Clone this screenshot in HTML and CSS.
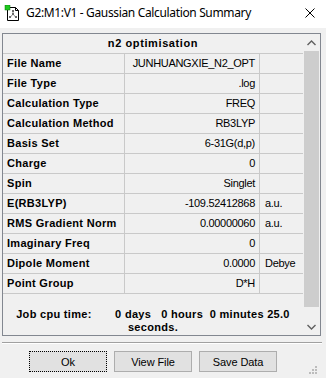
FILE: index.html
```html
<!DOCTYPE html>
<html>
<head>
<meta charset="utf-8">
<link rel="stylesheet" href="styles.css">
</head>
<body>
<div class="window">
  <div class="titlebar">
    <svg class="app-icon" width="16" height="16" viewBox="0 0 16 16">
      <path d="M3.5 2.5 H11.5 L14.5 5.5 V15.5 H3.5 Z" fill="#fff" stroke="#000" stroke-width="1"/>
      <path d="M11.5 2.5 V5.5 H14.5" fill="none" stroke="#000" stroke-width="1"/>
      <path d="M9 6 L9 9 M9 9 L6.5 12 M9 9 L11.5 12" stroke="#8a8a8a" stroke-width="1" fill="none"/>
      <rect x="8" y="5" width="2" height="2" fill="#6a6a6a"/>
      <rect x="8" y="8" width="2" height="2" fill="#6a6a6a"/>
      <rect x="5" y="11" width="2" height="2" fill="#6a6a6a"/>
      <rect x="11" y="11" width="2" height="2" fill="#6a6a6a"/>
      <rect x="1" y="0" width="5" height="5" fill="#1ec81e" stroke="#0a7a0a" stroke-width="0.5"/>
    </svg>
    <span class="title">G2:M1:V1 - Gaussian Calculation Summary</span>
    <svg class="close" width="10" height="10" viewBox="0 0 10 10">
      <path d="M0.5 0.5 L9.5 9.5 M9.5 0.5 L0.5 9.5" stroke="#000" stroke-width="1"/>
    </svg>
  </div>
  <div class="client">
    <div class="frame">
      <div class="list">
        <div class="grid">
          <div class="head">n2 optimisation</div>
          <div class="lbl">File Name</div><div class="val">JUNHUANGXIE_N2_OPT</div><div class="unit"></div>
          <div class="lbl">File Type</div><div class="val">.log</div><div class="unit"></div>
          <div class="lbl">Calculation Type</div><div class="val">FREQ</div><div class="unit"></div>
          <div class="lbl">Calculation Method</div><div class="val">RB3LYP</div><div class="unit"></div>
          <div class="lbl">Basis Set</div><div class="val">6-31G(d,p)</div><div class="unit"></div>
          <div class="lbl">Charge</div><div class="val">0</div><div class="unit"></div>
          <div class="lbl">Spin</div><div class="val">Singlet</div><div class="unit"></div>
          <div class="lbl">E(RB3LYP)</div><div class="val">-109.52412868</div><div class="unit">a.u.</div>
          <div class="lbl">RMS Gradient Norm</div><div class="val">0.00000060</div><div class="unit">a.u.</div>
          <div class="lbl">Imaginary Freq</div><div class="val">0</div><div class="unit"></div>
          <div class="lbl">Dipole Moment</div><div class="val">0.0000</div><div class="unit">Debye</div>
          <div class="lbl">Point Group</div><div class="val">D*H</div><div class="unit"></div>
        </div>
        <p class="cpu">Job cpu time:       0 days   0 hours  0 minutes 25.0 seconds.</p>
      </div>
      <div class="scrollbar">
        <div class="arrow">
          <svg width="9" height="6" viewBox="0 0 9 6"><path d="M0.5 5 L4.5 1 L8.5 5" stroke="#606060" stroke-width="1.4" fill="none"/></svg>
        </div>
        <div class="track"><div class="thumb"></div></div>
        <div class="arrow">
          <svg width="9" height="6" viewBox="0 0 9 6"><path d="M0.5 1 L4.5 5 L8.5 1" stroke="#606060" stroke-width="1.4" fill="none"/></svg>
        </div>
      </div>
    </div>
    <div class="sep"></div>
    <div class="buttons">
      <button class="btn default">Ok</button>
      <button class="btn">View File</button>
      <button class="btn">Save Data</button>
    </div>
    <svg class="grip" width="8" height="8" viewBox="0 0 8 8">
      <rect x="6" y="0" width="2" height="2" fill="#bcbcbc"/>
      <rect x="3" y="3" width="2" height="2" fill="#bcbcbc"/>
      <rect x="6" y="3" width="2" height="2" fill="#bcbcbc"/>
      <rect x="0" y="6" width="2" height="2" fill="#bcbcbc"/>
      <rect x="3" y="6" width="2" height="2" fill="#bcbcbc"/>
      <rect x="6" y="6" width="2" height="2" fill="#bcbcbc"/>
    </svg>
  </div>
</div>
</body>
</html>
```

FILE: styles.css
```css
html, body {
  margin: 0;
  padding: 0;
}
body {
  width: 326px;
  height: 378px;
  overflow: hidden;
  background: #f0f0f0;
  font-family: "Liberation Sans", Arial, sans-serif;
  color: #000;
}
.window {
  width: 326px;
  height: 378px;
  position: relative;
}
.titlebar {
  height: 28px;
  background: #fff;
  display: flex;
  align-items: center;
  position: relative;
}
.app-icon {
  margin-left: 4px;
  margin-top: -2px;
}
.title {
  margin-left: 6px;
  font-family: "Noto Sans", "Open Sans", sans-serif;
  font-size: 12px;
  letter-spacing: -0.35px;
  color: #000;
  margin-top: -3px;
}
.close {
  position: absolute;
  left: 305px;
  top: 8px;
}
.client {
  position: relative;
  height: 350px;
}
.frame {
  margin: 5px 0 0 2px;
  width: 319px;
  height: 303px;
  box-sizing: border-box;
  border: 1px solid #828790;
  display: flex;
}
.list {
  width: 300px;
  flex: none;
}
.grid {
  display: grid;
  grid-template-columns: 122px 135px 43px;
  grid-auto-rows: 20px;
}
.grid > div {
  box-sizing: border-box;
  border-bottom: 1px solid #c9c9c9;
  font-size: 11px;
  line-height: 19px;
  white-space: nowrap;
  overflow: hidden;
}
.head {
  grid-column: 1 / 4;
  text-align: center;
  font-weight: bold;
  letter-spacing: 0.6px;
}
.lbl {
  font-weight: bold;
  padding-left: 4px;
  border-right: 1px solid #c9c9c9;
  letter-spacing: 0.3px;
}
.val {
  text-align: right;
  padding-right: 4px;
  border-right: 1px solid #c9c9c9;
  letter-spacing: -0.3px;
}
.unit {
  padding-left: 5px;
  letter-spacing: -0.3px;
}
.cpu {
  margin: 0;
  padding: 14px 0 0 0;
  font-size: 11px;
  line-height: 13px;
  font-weight: bold;
  text-align: center;
  white-space: pre-wrap;
  letter-spacing: 0.3px;
}
.scrollbar {
  width: 17px;
  flex: none;
  display: flex;
  flex-direction: column;
  background: #f0f0f0;
}
.arrow {
  height: 17px;
  display: flex;
  align-items: center;
  justify-content: center;
  flex: none;
}
.track {
  flex: 1;
  padding: 0 1px;
  display: flex;
  flex-direction: column;
}
.thumb {
  height: 256px;
  background: #cdcdcd;
}
.sep {
  margin: 6px 0 0 2px;
  width: 320px;
  border-top: 1px solid #a0a0a0;
  border-bottom: 1px solid #fff;
}
.buttons {
  display: flex;
  gap: 7px;
  padding-left: 29px;
  margin-top: 7px;
}
.btn {
  width: 78px;
  height: 21px;
  box-sizing: border-box;
  background: #e1e1e1;
  border: 1px solid #adadad;
  font-family: "Liberation Sans", Arial, sans-serif;
  font-size: 11px;
  color: #000;
  padding: 0;
  letter-spacing: -0.1px;
}
.btn.default {
  border: 1px dotted #000;
  box-shadow: inset 0 0 0 1px #e1e1e1;
}
.grip {
  position: absolute;
  left: 309px;
  top: 333px;
}
```
